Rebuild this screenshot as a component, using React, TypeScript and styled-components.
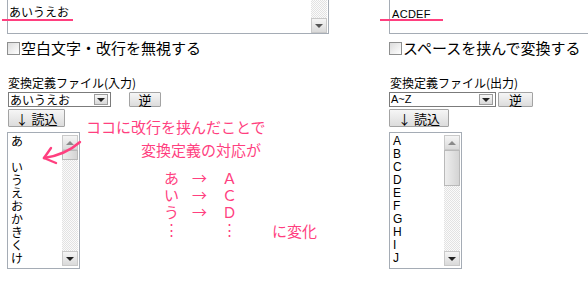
import React from "react";
import styled, { createGlobalStyle } from "styled-components";

const GlobalStyle = createGlobalStyle`
  html, body { margin: 0; padding: 0; background: #fff; overflow: hidden; }
  body { font-family: "Noto Sans CJK JP", sans-serif; color: #000; }
`;

const PINK = "#ff3f7f";
const CJK = `"Noto Sans CJK JP", sans-serif`;
const LATIN = `"Liberation Sans", "Noto Sans CJK JP", sans-serif`;

const Page = styled.div`
  position: relative;
  width: 588px;
  height: 281px;
  padding-left: 7px;
  box-sizing: border-box;
  display: grid;
  grid-template-columns: 382px 240px;
  align-items: start;
`;

const Column = styled.div`
  display: flex;
  flex-direction: column;
  align-items: flex-start;
`;

const TextBox = styled.div<{ $w: number }>`
  width: ${(p) => p.$w}px;
  height: 34px;
  box-sizing: border-box;
  border: 1px solid #a5acb5;
  border-top: none;
  display: flex;
  background: #fff;
`;

const TextContent = styled.div<{ $latin?: boolean }>`
  flex: 1;
  font-family: ${(p) => (p.$latin ? LATIN : CJK)};
  font-size: ${(p) => (p.$latin ? 11 : 12)}px;
  line-height: 14px;
  padding: ${(p) => (p.$latin ? "7px 0 0 2px" : "5px 0 0 1px")};
  letter-spacing: ${(p) => (p.$latin ? "0.3px" : "0")};
`;

const Scrollbar = styled.div`
  width: 16px;
  margin-right: 1px;
  display: flex;
  flex-direction: column;
  background: repeating-conic-gradient(#e2e2e2 0 25%, #fbfbfb 0 50%) 0 0 / 2px 2px;
`;

const ListScrollbar = styled(Scrollbar)`
  margin: 2px 1px 2px 0;
`;

const ScrollButton = styled.div`
  height: 15px;
  flex: none;
  box-sizing: border-box;
  border: 1px solid #c9c9c9;
  background: linear-gradient(#f5f5f5, #dadada);
  display: flex;
  align-items: center;
  justify-content: center;
`;

const Track = styled.div`
  flex: 1;
`;

const Thumb = styled.div<{ $h: number }>`
  height: ${(p) => p.$h}px;
  flex: none;
  box-sizing: border-box;
  border: 1px solid #b9b9b9;
  background: linear-gradient(90deg, #eeeeee, #d4d4d4);
`;

const TriUp = styled.div`
  width: 0;
  height: 0;
  border-left: 4px solid transparent;
  border-right: 4px solid transparent;
  border-bottom: 4px solid #8a8a8a;
`;

const TriDown = styled.div<{ $c?: string }>`
  width: 0;
  height: 0;
  border-left: 4px solid transparent;
  border-right: 4px solid transparent;
  border-top: 4px solid ${(p) => p.$c || "#222"};
`;

const CheckRow = styled.div`
  margin-top: 6px;
  height: 16px;
  display: flex;
  align-items: center;
  gap: 1px;
`;

const CheckBox = styled.div`
  width: 13px;
  height: 13px;
  box-sizing: border-box;
  border: 1px solid #8e8f8f;
  background: linear-gradient(135deg, #dcdcdc, #ffffff);
  margin-top: 1px;
`;

const CheckLabel = styled.span`
  font-family: ${CJK};
  font-size: 15px;
  line-height: 16px;
  white-space: nowrap;
`;

const FieldLabel = styled.div`
  margin-top: 20px;
  margin-left: 1px;
  font-family: ${CJK};
  font-size: 12px;
  line-height: 14px;
  white-space: nowrap;
`;

const ControlRow = styled.div<{ $gap: number }>`
  margin-top: 2px;
  display: flex;
  align-items: center;
  gap: ${(p) => p.$gap}px;
`;

const Select = styled.div<{ $w: number; $ml: number }>`
  width: ${(p) => p.$w}px;
  margin-left: ${(p) => p.$ml}px;
  height: 15px;
  box-sizing: border-box;
  border: 1px solid #7b7b7b;
  background: #fff;
  display: flex;
  align-items: center;
`;

const SelectText = styled.span<{ $latin?: boolean }>`
  flex: 1;
  padding-left: 1px;
  font-family: ${(p) => (p.$latin ? LATIN : CJK)};
  font-size: ${(p) => (p.$latin ? 11 : 12)}px;
  line-height: 13px;
  white-space: nowrap;
`;

const SelectButton = styled.div`
  width: 14px;
  height: 11px;
  margin-right: 2px;
  box-sizing: border-box;
  border: 1px solid #9c9c9c;
  background: linear-gradient(#f7f7f7, #d8d8d8);
  display: flex;
  align-items: center;
  justify-content: center;
`;

const Button = styled.div<{ $w: number; $h: number; $ml?: number }>`
  width: ${(p) => p.$w}px;
  height: ${(p) => p.$h}px;
  margin-left: ${(p) => p.$ml || 0}px;
  box-sizing: border-box;
  border: 1px solid #a3a3a3;
  border-radius: 1px;
  background: linear-gradient(#f6f6f6, #dcdcdc);
  display: flex;
  align-items: center;
  justify-content: center;
  font-family: ${CJK};
  font-size: 13px;
  line-height: 13px;
  white-space: nowrap;
`;

const ButtonRow = styled.div<{ $ml: number }>`
  margin-top: 2px;
  margin-left: ${(p) => p.$ml}px;
`;

const ListBox = styled.div`
  margin-top: 5px;
  width: 73px;
  height: 137px;
  box-sizing: border-box;
  border: 1px solid #a5acb5;
  background: #fff;
  display: flex;
`;

const ListItems = styled.div<{ $latin?: boolean }>`
  flex: 1;
  padding: ${(p) => (p.$latin ? "2px 0 0 3px" : "1px 0 0 3px")};
  font-family: ${(p) => (p.$latin ? LATIN : CJK)};
  font-size: 12px;
  line-height: 13px;
  overflow: hidden;
`;

const ListItem = styled.div`
  height: 13px;
  white-space: nowrap;
`;

const Underline = styled.div<{ $x: number; $w: number }>`
  position: absolute;
  top: 19px;
  left: ${(p) => p.$x}px;
  width: ${(p) => p.$w}px;
  height: 2px;
  background: ${PINK};
`;

const Annotation = styled.div`
  position: absolute;
  left: 43px;
  top: 118px;
  display: flex;
  flex-direction: column;
  align-items: flex-start;
  color: ${PINK};
  font-family: ${CJK};
  font-size: 15px;
  line-height: 17px;
  white-space: nowrap;
`;

const Note = styled.div<{ $ml: number; $mt: number }>`
  margin-left: ${(p) => p.$ml}px;
  margin-top: ${(p) => p.$mt}px;
`;

const MapGrid = styled.div`
  margin-left: 121px;
  margin-top: 11px;
  display: grid;
  grid-template-columns: 28px 30px 50px auto;
  grid-auto-rows: 17px;
`;

const Cell = styled.div<{ $dy?: number }>`
  position: relative;
  top: ${(p) => p.$dy || 0}px;
`;

const ArrowSvg = styled.svg`
  position: absolute;
  left: 40px;
  top: 137px;
  overflow: visible;
`;

const leftItems = ["あ", "", "い", "う", "え", "お", "か", "き", "く", "け"];
const rightItems = ["A", "B", "C", "D", "E", "F", "G", "H", "I", "J"];

const ListScroll: React.FC<{ thumb: number }> = ({ thumb }) => (
  <ListScrollbar>
    <ScrollButton>
      <TriUp />
    </ScrollButton>
    <Thumb $h={thumb} />
    <Track />
    <ScrollButton>
      <TriDown />
    </ScrollButton>
  </ListScrollbar>
);

export default function App() {
  return (
    <>
      <GlobalStyle />
      <Page>
        <Column>
          <TextBox $w={322}>
            <TextContent>あいうえお</TextContent>
            <Scrollbar>
              <Track />
              <ScrollButton>
                <TriDown $c="#555" />
              </ScrollButton>
            </Scrollbar>
          </TextBox>
          <CheckRow>
            <CheckBox />
            <CheckLabel>空白文字・改行を無視する</CheckLabel>
          </CheckRow>
          <FieldLabel>変換定義ファイル(入力)</FieldLabel>
          <ControlRow $gap={18}>
            <Select $w={103} $ml={1}>
              <SelectText>あいうえお</SelectText>
              <SelectButton>
                <TriDown />
              </SelectButton>
            </Select>
            <Button $w={32} $h={15}>逆</Button>
          </ControlRow>
          <ButtonRow $ml={1}>
            <Button $w={57} $h={18}>↓ 読込</Button>
          </ButtonRow>
          <ListBox>
            <ListItems>
              {leftItems.map((t, i) => (
                <ListItem key={i}>{t || "\u00a0"}</ListItem>
              ))}
            </ListItems>
            <ListScroll thumb={10} />
          </ListBox>
        </Column>
        <Column>
          <TextBox $w={240}>
            <TextContent $latin>ACDEF</TextContent>
          </TextBox>
          <CheckRow>
            <CheckBox />
            <CheckLabel>スペースを挟んで変換する</CheckLabel>
          </CheckRow>
          <FieldLabel>変換定義ファイル(出力)</FieldLabel>
          <ControlRow $gap={2}>
            <Select $w={107} $ml={0}>
              <SelectText $latin>A~Z</SelectText>
              <SelectButton>
                <TriDown />
              </SelectButton>
            </Select>
            <Button $w={35} $h={15}>逆</Button>
          </ControlRow>
          <ButtonRow $ml={0}>
            <Button $w={60} $h={18}>↓ 読込</Button>
          </ButtonRow>
          <ListBox>
            <ListItems $latin>
              {rightItems.map((t) => (
                <ListItem key={t}>{t}</ListItem>
              ))}
            </ListItems>
            <ListScroll thumb={36} />
          </ListBox>
        </Column>

        <Underline $x={2} $w={71} />
        <Underline $x={380} $w={63} />

        <ArrowSvg width="45" height="30" viewBox="0 0 45 30">
          <g fill="none" stroke={PINK} strokeWidth="2.4" strokeLinecap="round" strokeLinejoin="round">
            <path d="M40 5 C31 13, 18 19, 4 21" />
            <path d="M4 21 L11 11" />
            <path d="M4 21 L16 26" />
          </g>
        </ArrowSvg>

        <Annotation>
          <Note $ml={43} $mt={0}>ココに改行を挟んだことで</Note>
          <Note $ml={98} $mt={6}>変換定義の対応が</Note>
          <MapGrid>
            <Cell>あ</Cell>
            <Cell>→</Cell>
            <Cell>Ａ</Cell>
            <Cell />
            <Cell>い</Cell>
            <Cell>→</Cell>
            <Cell>Ｃ</Cell>
            <Cell />
            <Cell>う</Cell>
            <Cell>→</Cell>
            <Cell>Ｄ</Cell>
            <Cell />
            <Cell>⋮</Cell>
            <Cell />
            <Cell>⋮</Cell>
            <Cell $dy={2}>に変化</Cell>
          </MapGrid>
        </Annotation>
      </Page>
    </>
  );
}
